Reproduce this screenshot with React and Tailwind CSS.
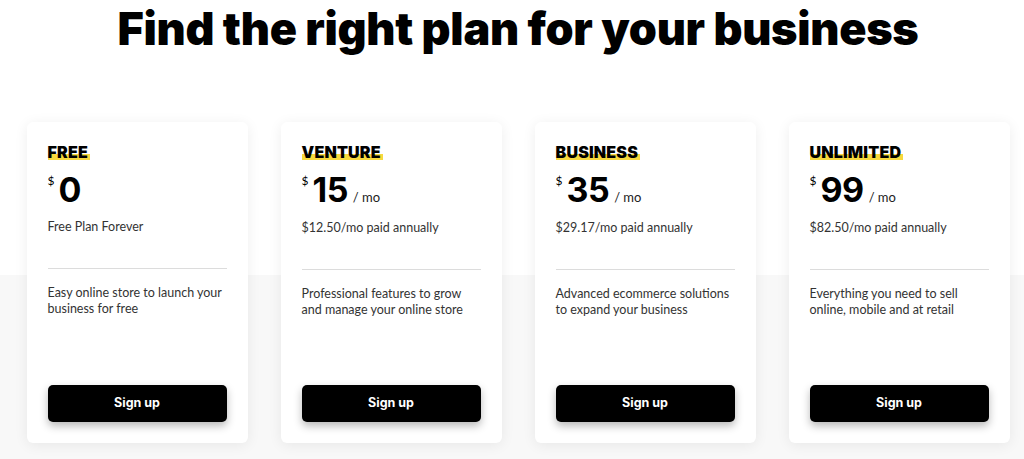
const plans = [
  { name: 'FREE', price: '0', per: false, sub: 'Free Plan Forever', desc: ['Easy online store to launch your', 'business for free'] },
  { name: 'VENTURE', price: '15', per: true, sub: '$12.50/mo paid annually', desc: ['Professional features to grow', 'and manage your online store'] },
  { name: 'BUSINESS', price: '35', per: true, sub: '$29.17/mo paid annually', desc: ['Advanced ecommerce solutions', 'to expand your business'] },
  { name: 'UNLIMITED', price: '99', per: true, sub: '$82.50/mo paid annually', desc: ['Everything you need to sell', 'online, mobile and at retail'] },
];

const PlanCard = ({ plan }) => (
  <div className="w-[221px] h-[321px] shrink-0 rounded-md bg-white shadow-[0_2px_14px_rgba(0,0,0,0.07)] px-[21px] pt-5 pb-[21px] flex flex-col">
    <div className="leading-5">
      <span className="text-[16px] font-black tracking-[0.2px] text-black bg-[linear-gradient(to_bottom,transparent_62%,#f7d93e_62%,#f7d93e_92%,transparent_92%)] pr-[2px]">
        {plan.name}
      </span>
    </div>

    {/* price row */}
    <div className="mt-[11px] flex items-baseline text-black">
      <span className="self-start text-[12px] leading-none mt-[2px] mr-[4px] font-['Lato',sans-serif]">$</span>
      <span className="text-[34px] font-bold leading-none tracking-[-0.5px]">{plan.price}</span>
      {plan.per && <span className="ml-[5px] text-[13px] text-[#222] font-['Lato',sans-serif]">/ mo</span>}
    </div>

    <p className="mt-3 text-[12.5px] leading-4 text-[#333] whitespace-nowrap font-['Lato',sans-serif]">{plan.sub}</p>

    <div className="mt-[33px] h-px bg-[#dcdcdc]" />

    <p className="mt-4 text-[12.5px] leading-4 text-[#333] whitespace-nowrap font-['Lato',sans-serif]">
      {plan.desc[0]}
      <br />
      {plan.desc[1]}
    </p>

    <button className="mt-auto h-[37px] w-full rounded-[5px] bg-black text-white text-[12.5px] font-bold shadow-[0_4px_8px_rgba(0,0,0,0.28)]">
      Sign up
    </button>
  </div>
);

export default function App() {
  return (
    <div
      className="min-h-[459px] w-full bg-[linear-gradient(to_bottom,#ffffff_275px,#f8f8f8_275px)] font-['Inter','Liberation_Sans',sans-serif]"
    >
      <div className="ml-[12px] flex flex-col items-center pt-[6px]">
        <h1 className="text-[45px] leading-none font-black tracking-[-0.3px] text-black">
          Find the right plan for your business
        </h1>
        <div className="mt-[71px] flex gap-[33px]">
          {plans.map((p) => (
            <PlanCard key={p.name} plan={p} />
          ))}
        </div>
      </div>
    </div>
  );
}
